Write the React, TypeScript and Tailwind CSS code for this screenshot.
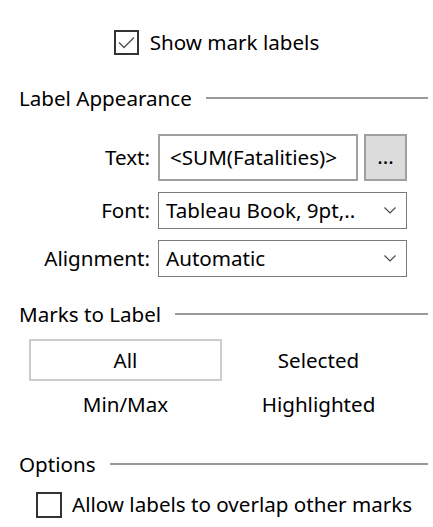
import React from "react";

const Chevron = () => (
  <svg width="12" height="7" viewBox="0 0 12 7" fill="none">
    <path d="M0.5 0.5 L6 6 L11.5 0.5" stroke="#444" strokeWidth="1.1" />
  </svg>
);

const Header = ({ title, mt }: { title: string; mt: string }) => (
  <div className={`flex items-center h-[24px] pl-[19px] pr-[5px] ${mt}`}>
    <span className="whitespace-nowrap">{title}</span>
    <div className="flex-1 h-[2px] bg-[#9a9a9a] ml-[14px]" />
  </div>
);

export default function App() {
  return (
    <div
      className="w-[433px] h-[527px] bg-white text-black text-[20.6px] leading-none overflow-hidden"
      style={{ fontFamily: "'Noto Sans', sans-serif" }}
    >
      <div className="pt-[30px] flex justify-center">
        <div className="flex items-center h-[25px]">
          <div className="w-[25px] h-[25px] border-2 border-[#333] flex items-center justify-center">
            <svg width="17" height="13" viewBox="0 0 17 13" fill="none">
              <path d="M1 6.5 L6 11.5 L16 1.5" stroke="#555" strokeWidth="1.5" />
            </svg>
          </div>
          <span className="ml-[11px]">Show mark labels</span>
        </div>
      </div>

      <Header title="Label Appearance" mt="mt-[31px]" />

      <div className="mt-[24px] grid grid-cols-[150px_1fr] gap-x-[8px] gap-y-[11px] pr-[26px]">
        <div className="flex items-center justify-end h-[47px]">Text:</div>
        <div className="flex h-[47px] gap-[6px]">
          <div className="w-[200px] border-2 border-[#a0a0a0] flex items-center pl-[10px] whitespace-nowrap">
            &lt;SUM(Fatalities)&gt;
          </div>
          <div className="flex-1 border-2 border-[#a0a0a0] bg-[#dcdcdc] flex items-center justify-center pb-[2px]">
            ...
          </div>
        </div>
        <div className="flex items-center justify-end h-[37px]">Font:</div>
        <div className="h-[37px] border border-[#7a7a7a] flex items-center justify-between pl-[7px] pr-[10px]">
          <span className="whitespace-nowrap">Tableau Book, 9pt,..</span>
          <Chevron />
        </div>
        <div className="flex items-center justify-end h-[37px]">Alignment:</div>
        <div className="h-[37px] border border-[#7a7a7a] flex items-center justify-between pl-[7px] pr-[10px]">
          <span>Automatic</span>
          <Chevron />
        </div>
      </div>

      <Header title="Marks to Label" mt="mt-[25px]" />

      <div className="mt-[13px] ml-[29px] grid grid-cols-[193px_193px] grid-rows-[42px_42px] gap-y-[2px]">
        <div className="border-2 border-[#cccccc] flex items-center justify-center">All</div>
        <div className="flex items-center justify-center">Selected</div>
        <div className="flex items-center justify-center">Min/Max</div>
        <div className="flex items-center justify-center">Highlighted</div>
      </div>

      <Header title="Options" mt="mt-[27px]" />

      <div className="mt-[16px] ml-[36px] flex items-center h-[25px]">
        <div className="w-[26px] h-[26px] border-2 border-[#333]" />
        <span className="ml-[10px] whitespace-nowrap">Allow labels to overlap other marks</span>
      </div>
    </div>
  );
}
